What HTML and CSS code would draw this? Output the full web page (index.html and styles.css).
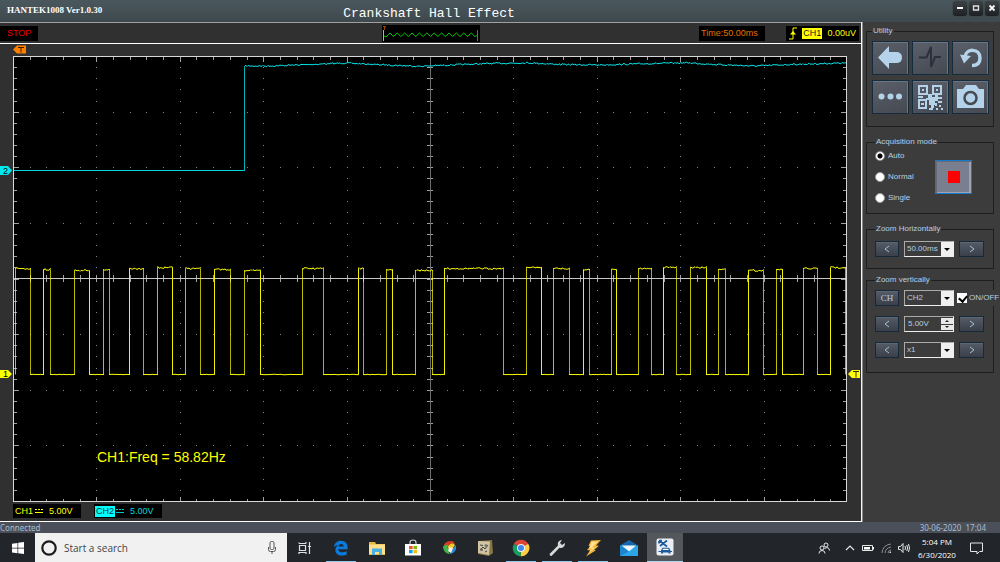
FILE: index.html
```html
<!DOCTYPE html>
<html lang="en">
<head>
<meta charset="utf-8">
<title>HANTEK1008 Ver1.0.30</title>
<link rel="stylesheet" href="styles.css">
</head>
<body>
<header class="titlebar">
  <span class="app-name">HANTEK1008 Ver1.0.30</span>
  <h1 class="title">Crankshaft Hall Effect</h1>
  <div class="window-buttons">
    <button class="win-btn" aria-label="Minimize"><svg viewBox="0 0 14 14"><path d="M4 7h6" stroke="#fff" stroke-width="2"/></svg></button>
    <button class="win-btn" aria-label="Maximize"><svg viewBox="0 0 14 14"><path d="M4.500 5h5v4h-5z" fill="none" stroke="#dfe4e6" stroke-width="1.300"/></svg></button>
    <button class="win-btn" aria-label="Close"><svg viewBox="0 0 14 14"><path d="M4.500 4.500l5 5M9.500 4.500l-5 5" stroke="#fff" stroke-width="1.800"/></svg></button>
  </div>
</header>

<main class="workspace">
  <section class="scope">
    <div class="infobar">
      <div class="infobar-left"><span class="readout stop">STOP</span></div>
      <svg class="preview" viewBox="0 0 98 17" aria-hidden="true">
        <path d="M2 11l2 1 4-4 3.500 3.500 3.700-3.500 3.700 3.500 3.700-3.500 3.700 3.500 3.700-3.500 3.700 3.500 3.700-3.500 3.700 3.500 3.700-3.500 3.700 3.500 3.700-3.500 3.700 3.500 3.700-3.500 3.700 3.500 3.700-3.500 3.700 3.500 3.700-3.500 3.700 3.500 3.700-3.500 3.700 3.500 3.700-3.500 3.700 3.500 2-1" fill="none" stroke="#00c800"/>
        <path d="M1.500 5v11" stroke="#0ff"/><path d="M95.500 5v11" stroke="#009a9a"/>
        <path d="M1 1.500h3M2.500 1v4" stroke="#a04a00"/>
      </svg>
      <div class="infobar-right">
        <span class="readout time">Time:50.00ms</span>
        <span class="readout trigger">
          <svg class="edge-icon" viewBox="0 0 8 13" aria-hidden="true"><path d="M0 12h4V1h4" fill="none" stroke="#ff0"/><path d="M1 7.500h6L4 4z" fill="#ff0"/></svg>
          <span class="tag tag-yellow">CH1</span><span>0.00uV</span>
        </span>
      </div>
    </div>
    <svg class="plot" viewBox="0 44 861 459" role="img" aria-label="Oscilloscope traces">
      <rect x="13" y="56" width="834" height="446" fill="#000"/>
      <g id="grid"></g>
      <path d="M13 278.500h834" stroke="#c8c8c8"/>
      <path d="M430.500 56v446" stroke="#6e6e6e"/>
      <g id="traces" fill="none"></g>
      <rect x="13.500" y="56.500" width="833" height="445" fill="none" stroke="#d8d8d8"/>
      <path d="M13 49.500l4-4h9v8h-9z" fill="#ff8000"/>
      <path d="M18 47.500h6M21 47.500v5" stroke="#3a2000" fill="none"/>
      <path d="M0 166h8l4 4.500-4 4.500H0z" fill="#00e8f0"/>
      <text x="3" y="174" class="marker">2</text>
      <path d="M0 370h8l4 4-4 4H0z" fill="#ff0"/>
      <text x="3" y="377" class="marker">1</text>
      <path d="M848 374l4-4h8v8h-8z" fill="#ff0"/>
      <path d="M853 371.500h6M856 371.500v6" stroke="#333300" fill="none"/>
      <text x="97" y="462" class="measure">CH1:Freq = 58.82Hz</text>
    </svg>
    <div class="channels">
      <span class="readout channel ch1"><span class="tag">CH1</span><svg class="dc" viewBox="0 0 8 5" aria-hidden="true"><path d="M0 .5h8" stroke="#ff0" stroke-dasharray="2 1"/><path d="M0 3.500h8" stroke="#ff0"/></svg><span>5.00V</span></span>
      <span class="readout channel ch2"><span class="tag tag-cyan">CH2</span><svg class="dc" viewBox="0 0 8 5" aria-hidden="true"><path d="M0 .5h8" stroke="#0cc" stroke-dasharray="2 1"/><path d="M0 3.500h8" stroke="#0cc"/></svg><span>5.00V</span></span>
    </div>
  </section>

  <aside class="side">
    <fieldset class="group utility">
      <legend>Utility</legend>
      <button class="tool" aria-label="Back"><svg viewBox="0 0 35 32"><path d="M5 15.500L16 4v6h7q6 0 6 5.500T23 21h-7v6z"/></svg></button>
      <button class="tool" aria-label="Pulse"><svg viewBox="0 0 35 32"><path d="M6 15.500h7.500L18 5v20l4-10h6" fill="none" stroke="#2d2f3c" stroke-width="2"/></svg></button>
      <button class="tool" aria-label="Undo"><svg viewBox="0 0 35 32"><path d="M12 15c1-9 15-9 15 1 0 5-3 7.500-8 7.500" fill="none" stroke="#b4d3ea" stroke-width="3.500"/><path d="M7 12.500l11 1.500-7 7.500z"/></svg></button>
      <button class="tool" aria-label="More"><svg viewBox="0 0 35 32"><circle cx="8.500" cy="15.500" r="3"/><circle cx="17.500" cy="15.500" r="3"/><circle cx="26" cy="15.500" r="3"/></svg></button>
      <button class="tool" aria-label="QR code"><svg viewBox="0 0 35 32"><path fill-rule="evenodd" d="M5 4h10v10H5zm2 2v6h6V6zM19 4h10v10H19zm2 2v6h6V6zM5 18h9v10H5zm2 2v6h5v-6z"/><path d="M9 8h2v2H9zM23 8h2v2h-2zM8 22h3v2H8zM15 13h4v3h3v-2h3v2h4v2h-4v2h-3v2h2v2h-3v3h-3v-3h-2v-5h-3v-2h2zM5 15h5v2H5zM25 20h4v2h-4zM22 23h2v2h-2zM26 24h2v2h-2zM23 27h2v2h-2zM16 27h4v2h-4zM28 27h2v2h-2z"/></svg></button>
      <button class="tool" aria-label="Snapshot"><svg viewBox="0 0 35 32"><path d="M4 8h6l3-4h10l3 4h5v19H4z"/><circle cx="17.500" cy="17" r="6" fill="#b4d3ea" stroke="#464a52" stroke-width="2.500"/></svg></button>
    </fieldset>

    <fieldset class="group acquisition">
      <legend>Acquisition mode</legend>
      <div class="modes">
        <label><input type="radio" name="mode" checked>Auto</label>
        <label><input type="radio" name="mode">Normal</label>
        <label><input type="radio" name="mode">Single</label>
      </div>
      <button class="stop-btn" aria-label="Stop acquisition"><span></span></button>
    </fieldset>

    <fieldset class="group zoom zoom-h">
      <legend>Zoom Horizontally</legend>
      <button class="step" aria-label="Shorter time base"><svg viewBox="0 0 8 8"><path d="M6 1L2 4l4 3"/></svg></button>
      <span class="combo"><select aria-label="Time base"><option>50.00ms</option></select></span>
      <button class="step" aria-label="Longer time base"><svg viewBox="0 0 8 8"><path d="M2 1l4 3-4 3"/></svg></button>
    </fieldset>

    <fieldset class="group zoom">
      <legend>Zoom vertically</legend>
      <button class="step step-text">CH</button>
      <span class="combo"><select aria-label="Channel"><option>CH2</option></select></span>
      <label class="toggle"><input type="checkbox" checked>ON/OFF</label>

      <button class="step" aria-label="Smaller scale"><svg viewBox="0 0 8 8"><path d="M6 1L2 4l4 3"/></svg></button>
      <span class="spinner"><input type="text" value="5.00V" aria-label="Volts per division"><span class="spin"><button aria-label="Up"><i class="up"></i></button><button aria-label="Down"><i class="down"></i></button></span></span>
      <button class="step" aria-label="Larger scale"><svg viewBox="0 0 8 8"><path d="M2 1l4 3-4 3"/></svg></button>

      <button class="step" aria-label="Lower probe factor"><svg viewBox="0 0 8 8"><path d="M6 1L2 4l4 3"/></svg></button>
      <span class="combo"><select aria-label="Probe factor"><option>x1</option></select></span>
      <button class="step" aria-label="Higher probe factor"><svg viewBox="0 0 8 8"><path d="M2 1l4 3-4 3"/></svg></button>
    </fieldset>
  </aside>
</main>

<div class="statusbar"><span>Connected</span><span>30-06-2020&nbsp; 17:04</span></div>

<footer class="taskbar">
  <button class="start" aria-label="Start"><svg viewBox="0 0 12 12"><path fill="#fff" d="M0 1.700l5.500-.8v4.800H0zM6.200.8L12 0v5.700H6.200zM0 6.400h5.500v4.800L0 10.400zM6.200 6.400H12V12l-5.800-.8z"/></svg></button>
  <div class="search">
    <svg class="cortana" viewBox="0 0 16 16" aria-hidden="true"><circle cx="8" cy="8" r="6.700" fill="none" stroke="#1b1b1b" stroke-width="2.200"/></svg>
    <input type="text" placeholder="Start a search" aria-label="Start a search">
    <svg class="mic" viewBox="0 0 8 13" aria-hidden="true"><rect x="2" y=".5" width="4" height="8" rx="1.500" fill="none" stroke="#555"/><path d="M.5 6v2.500q0 2 2 2h3q2 0 2-2V6M4 10.500V13" fill="none" stroke="#555"/></svg>
  </div>
  <nav class="apps">
    <button class="app" aria-label="Task view"><svg viewBox="0 0 18 18"><path d="M3.500 6.500h6v5h-6zM3 3.500v1M3 4.500h7M10 3v1.500M3 15v-1.500h7V15M13.500 3v12M12 7.500h3" fill="none" stroke="#e0e0e0" stroke-width="1.200"/></svg></button>
    <button class="app open" aria-label="Edge"><svg viewBox="0 0 18 18"><path fill="#0a7bdc" d="M2 8.200C2.500 4 5.200 1.800 9 1.800c4.300 0 6.600 2.900 6.600 6.500v1.900H6.300c.2 2.200 1.900 3.100 4.100 3.100 1.700 0 3.100-.4 4.300-1.100v3.200c-1.200.7-3 1.100-4.900 1.100-3.900 0-6.400-2.200-6.400-5.600 0-2.300 1.300-3.900 3.400-4.800-1.800.1-3.500.8-4.800 2.100zm4.500-.6h5.200c0-1.700-.9-2.600-2.500-2.600S6.800 6 6.500 7.600z"/></svg></button>
    <button class="app" aria-label="File Explorer"><svg viewBox="0 0 18 18"><path fill="#e9b83c" d="M1 3h6l1 2h9v11H1z"/><path fill="#ffe08a" d="M1 5.500h16V15H1z"/><path fill="#4bb0e4" d="M4 16V9.500h10V16h-3v-3H7v3z"/></svg></button>
    <button class="app" aria-label="Store"><svg viewBox="0 0 18 18"><path d="M6 5V3.500Q6 1 9 1t3 2.500V5" fill="none" stroke="#ccc" stroke-width="1.200"/><path fill="#fff" d="M1 5h16v11.500H1z"/><path fill="#f25022" d="M5 7h3.600v3.200H5z"/><path fill="#7fba00" d="M9.400 7H13v3.200H9.400z"/><path fill="#00a4ef" d="M5 11h3.600v3.200H5z"/><path fill="#ffb900" d="M9.400 11H13v3.200H9.400z"/></svg></button>
    <button class="app" aria-label="Color swirl"><svg viewBox="0 0 18 18"><path fill="#e03a24" d="M3 9q1-7 8-7 3 0 4 3-5-2-7 2-2 1-5 2z"/><path fill="#3fb54a" d="M3 8q2-3 5-2-1 4 2 9-6 0-7-7z"/><path fill="#f5c928" d="M8 7q4-5 7-1l-4 6q-3-1-3-5z"/><path fill="#3487d6" d="M10 15l1-4 5-5q1 8-6 9z"/><path fill="#f4f4e6" d="M9 8l4 1-2 5-3-2z"/></svg></button>
    <button class="app" aria-label="Schematics"><svg viewBox="0 0 18 18"><path fill="#8a7440" d="M3 2l13-1 1 13-4 3-11-2z"/><path fill="#cfc5a2" d="M2 2l12 .5-1 13.500-11-2z"/><path d="M4 11l3-3 2 2 3-4M4 6l3 .5M9 13l2-1" stroke="#444" fill="none"/><circle cx="5.500" cy="10.500" r="1.500" fill="#666"/><circle cx="10" cy="6.500" r="1.500" fill="#777"/></svg></button>
    <button class="app open" aria-label="Chrome"><svg viewBox="0 0 18 18"><path fill="#dc4437" d="M9 9L1.800 5A8.200 8.200 0 0 1 16.200 5z"/><path fill="#ffce43" d="M9 9l7.200-4.200A8.200 8.200 0 0 1 8.500 17.200z"/><path fill="#15a05e" d="M9 9l-.5 8.200A8.200 8.200 0 0 1 1.800 5z"/><path fill="#dc4437" d="M9 5h7.200L15 3.500 9 2z"/><circle cx="9" cy="9" r="4" fill="#f2f2f2"/><circle cx="9" cy="9" r="3" fill="#4285f4"/></svg></button>
    <button class="app open" aria-label="Wrench"><svg viewBox="0 0 18 18"><path fill="#d8d8d8" d="M1.500 15L10 6.500Q9 3 12 1.500l2-.5-2 3 2 2 3-2q0 4-3.500 5-1 .3-2-.2L3.500 17q-2-.2-2-2z"/></svg></button>
    <button class="app open" aria-label="Lightning"><svg viewBox="0 0 18 18"><path fill="#f3b53a" d="M7 1.500L17 1l-5 5.500 3 .2-5 4.300 2 .3L2 17.500l4-6-3-.5 3.500-4-2-.3z"/><path fill="#ffe08c" d="M8 2.500h6L8 8.500l3 .3-6 5 3-4.300-3-.5z"/></svg></button>
    <button class="app" aria-label="Mail"><svg viewBox="0 0 18 18"><path fill="#1568b0" d="M0 6.500L9 1l9 5.500z"/><path fill="#2aa6e6" d="M0 6.500h18V17H0z"/><path fill="#eef6fb" d="M2 6.500h14l-7 6z"/><path fill="#1b86cf" d="M0 6.500l9 6L0 17z"/></svg></button>
    <button class="app active" aria-label="Hantek 1008"><svg viewBox="0 0 18 18"><rect x=".5" y=".5" width="17" height="17" rx="2" fill="#e8eef4"/><path d="M3 2.500l8 6M11 2.500L4 8M3 3v2.500M6 2.500H3" stroke="#1c5a9c" stroke-width="1.700" fill="none"/><path fill="#1c5a9c" d="M5 12.500l1.500-2.700h6.500l1.500 2.700v3h-2v-1H7v1H5zM2.500 13H16v1H2.500z"/><path fill="#fff" d="M7.200 10.700h5l.7 1.300H6.500z"/></svg></button>
  </nav>
  <div class="tray">
    <svg class="people" viewBox="0 0 12 12"><g fill="none" stroke="#e6e6e6"><circle cx="8" cy="3" r="2"/><circle cx="4" cy="6" r="2"/><path d="M1 11.500Q1 8.500 4 8.500t3 3M6.500 6.500Q11 4 11.500 8.500"/></g></svg>
    <svg class="chevron" viewBox="0 0 12 12"><path d="M2 8l4-4 4 4" fill="none" stroke="#e6e6e6" stroke-width="1.200"/></svg>
    <svg class="battery" viewBox="0 0 12 12"><path d="M.5 3.500h10v5H.5z" fill="none" stroke="#e6e6e6"/><path d="M2 5h6v2.500H2zM11 5h1v2.500h-1z" fill="#fff"/></svg>
    <svg class="wifi" viewBox="0 0 12 12"><path d="M2 11Q2.500 3 11 2M5 11Q5.500 6 11 5M8 11q.5-3 3-3" fill="none" stroke="#8b8d90"/><path d="M9 11l2-2v2z" fill="#ddd"/></svg>
    <svg class="speaker" viewBox="0 0 12 12"><path d="M.5 4.500h2l2.500-3v9l-2.500-3h-2zM7 4q1 2 0 4M8.800 3q1.600 3 0 6M10.500 2q2 4 0 8" fill="none" stroke="#e6e6e6"/></svg>
    <time class="clock"><span>5:04 PM</span><span>6/30/2020</span></time>
    <svg class="notice" viewBox="0 0 13 12"><path d="M.5 1h12v8.500H9.500L7 12V9.500H.5z" fill="none" stroke="#e6e6e6"/></svg>
  </div>
</footer>
<script src="scope.js"></script>
</body>
</html>
```
FILE: scope.js
```js
const NS = "http://www.w3.org/2000/svg";
const grid = document.getElementById("grid");
const traces = document.getElementById("traces");
const LEFT = 13, TOP = 56, WIDTH = 834, HEIGHT = 445;

function path(parent, d, stroke, opacity) {
  const el = document.createElementNS(NS, "path");
  el.setAttribute("d", d);
  el.setAttribute("stroke", stroke);
  if (opacity) el.setAttribute("opacity", opacity);
  parent.appendChild(el);
}

// Ten by eight divisions, each split in five.
let dots = "", ticks = "";
const gx = i => Math.round(LEFT + i * WIDTH / 50) + 0.5;
const gy = j => Math.round(TOP + j * HEIGHT / 40) + 0.5;
for (let i = 1; i < 50; i++) {
  const len = i % 5 ? 4 : 6;
  const x = gx(i);
  ticks += `M${x} 57v${len - 1}M${x} 502v${-len + 1}M${x} 275v7`;
  for (let j = 5; j < 40; j += 5) dots += `M${x - 0.5} ${gy(j)}h1`;
}
for (let j = 1; j < 40; j++) {
  const len = j % 5 ? 4 : 6;
  const y = gy(j);
  ticks += `M13 ${y}h${len}M847 ${y}h${-len}M427 ${y}h6`;
  for (let i = 5; i < 50; i += 5) dots += `M${gx(i) - 0.5} ${y}h1`;
}
path(grid, dots, "#858585");
path(grid, ticks, "#a0a0a0");

// Repeatable sampling noise.
let seed = 7;
function noise() {
  seed = (seed * 16807) % 2147483647;
  return seed / 2147483647 - 0.5;
}
function wobble(x0, x1, y0, y1, amount) {
  let d = `M${x0} ${y0}`;
  for (let x = x0 + 1; x <= x1; x++) {
    const t = (x - x0) / (x1 - x0);
    d += `L${x} ${(y0 + (y1 - y0) * t + noise() * amount).toFixed(1)}`;
  }
  return d;
}

// Channel 2: points of the upper level.
const level = [[245, 66], [270, 66], [310, 64.5], [345, 63], [375, 64.5], [420, 66.3], [450, 65],
  [490, 63.5], [528, 62.8], [560, 64.5], [600, 65], [640, 63.8], [688, 62.8], [715, 64.5],
  [755, 66], [790, 64.5], [846, 63]];
path(traces, "M14 170.500H245", "#00d8dc");
path(traces, "M244.500 171V66", "#00b4b8");
for (let i = 1; i < level.length; i++) {
  path(traces, wobble(level[i - 1][0], level[i][0], level[i - 1][1], level[i][1], 1.6), "#00e4e8");
}

// Channel 1: rise, fall and top level of each pulse.
const pulses = [[15, 30, 268], [43, 50, 269], [74, 89, 270], [103, 109, 269], [129, 143, 268],
  [157, 172, 267], [185, 200, 268], [214, 230, 269], [244, 260, 270], [302, 323, 268],
  [358, 363, 268], [386, 392, 269], [415, 432, 270], [444, 503, 268], [526, 541, 267],
  [553, 569, 268], [583, 589, 269], [611, 616, 269], [638, 651, 268], [663, 676, 267],
  [690, 706, 267], [718, 725, 269], [748, 763, 270], [776, 782, 269], [803, 817, 268],
  [830, 845, 267]];
const LOW = 374.5;
pulses.forEach(([up, down, top], i) => {
  const y = top + 0.5;
  path(traces, `M${up + 0.5} ${LOW}V${y}`, "#ffff00", i % 3 === 1 ? 0.95 : 0.75);
  path(traces, `M${down + 0.5} ${y}V${LOW}`, "#ffff00", i % 3 === 2 ? 0.95 : 0.7);
  path(traces, wobble(up, down + 1, y, y, 1.8), "#f8f800");
  const next = pulses[i + 1];
  if (next) path(traces, wobble(down, next[0] + 1, LOW, LOW, 0.5), "#ffff00");
});
```
FILE: styles.css
```css
* { box-sizing: border-box; }
body {
  margin: 0;
  min-height: 100vh;
  display: flex;
  flex-direction: column;
  background: #3c3c3c;
  color: #b4cfe4;
  font: 8px/10px "Liberation Sans", Arial, sans-serif;
}
button, input, select { font: inherit; color: inherit; margin: 0; }
button { padding: 0; border: 0; display: flex; align-items: center; justify-content: center; }
svg { display: block; }

.titlebar {
  height: 22px;
  display: grid;
  grid-template-columns: 1fr auto 1fr;
  align-items: center;
  padding: 0 1px 0 7px;
  background: linear-gradient(#4a585e, #3e484d);
  color: #fff;
}
.app-name { font: bold 9px/12px "Liberation Serif", serif; padding-bottom: 3px; }
.title { margin: 0; padding: 5px 148px 0 0; font: 13px/16px "Liberation Mono", monospace; }
.window-buttons { display: flex; justify-content: flex-end; gap: 2px; padding-bottom: 6px; }
.win-btn { width: 14px; height: 15px; border-radius: 3px; background: linear-gradient(#3d4245, #1d2022); box-shadow: 0 0 1px #11181b; }
.win-btn svg { width: 14px; height: 14px; }

.workspace { flex: 1; display: grid; grid-template-columns: minmax(0, 1fr) 138px; }
.scope {
  display: flex;
  flex-direction: column;
  background: #303030;
  border-right: 1px solid #f4f4f4;
  border-bottom: 1px solid #fff;
  min-width: 0;
}
.infobar {
  display: grid;
  grid-template-columns: 1fr 98px 1fr;
  align-items: center;
  height: 22px;
  border-top: 1px solid #a0a0a0;
  border-bottom: 1px solid #fff;
}
.infobar-left { display: flex; }
.infobar-right { display: flex; justify-content: flex-end; gap: 21px; padding-right: 2px; }
.preview { width: 98px; height: 17px; background: #000; }
.readout { display: flex; align-items: center; height: 15px; background: #000; font-size: 9px; line-height: 11px; }
.stop { padding: 0 7px; color: #e80000; }
.time { width: 66px; padding-left: 2px; color: #e87000; }
.trigger { width: 73px; padding: 0 3px; color: #ff0; justify-content: space-between; }
.edge-icon { width: 8px; height: 13px; }
.tag-yellow { background: #ff0; color: #222; padding: 0 1px; }
.plot { width: 100%; height: auto; }
.marker { font: 9px "Liberation Sans", sans-serif; fill: #000; }
.measure { font: 14px "Liberation Sans", sans-serif; fill: #ff0; }
.channels { display: flex; gap: 13px; padding: 1px 13px 3px; }
.channel { width: 68px; height: 14px; padding-left: 1px; gap: 1px; }
.channel .tag { padding: 0 1px; }
.channel .dc { width: 8px; height: 5px; margin-right: 5px; }
.ch1 { color: #ff0; }
.ch2 { color: #00d8dc; }
.tag-cyan { background: #0ff; color: #063c3c; }

.side { background: #3c3c3c; border-left: 1px solid #8a8a8a; padding: 4px 6px 0 3px; }
.group { margin: 0 0 10px; padding: 0; min-width: 0; border: 1px solid #1e1e1e; }
.group legend { margin-left: 6px; padding: 0 1px; height: 10px; }
.utility { display: grid; grid-template-columns: repeat(3, 37px); gap: 5px 3px; padding: 5px 5px 12px; }
.tool {
  height: 34px;
  background: linear-gradient(160deg, #5a5f69, #454952);
  border: 1px solid #152c3e;
  box-shadow: inset -1px 1px 0 #6c7480;
}
.tool svg { width: 35px; height: 32px; fill: #b4d3ea; }
.acquisition { display: flex; align-items: center; justify-content: space-between; padding: 4px 21px 10px 8px; }
.modes { display: flex; flex-direction: column; gap: 11px; }
.modes label { display: flex; align-items: center; gap: 3px; height: 10px; }
.modes input {
  appearance: none;
  width: 10px;
  height: 10px;
  border-radius: 50%;
  border: 1px solid #999;
  background: #fff;
}
.modes input:checked { background: radial-gradient(circle, #000 2px, #fff 3px); }
.stop-btn { width: 37px; height: 34px; background: #7a7f90; border: 1px solid #1878c8; box-shadow: inset 1px 1px 0 #656a7a, inset -2px -1px 0 #9da2b4; }
.stop-btn span { width: 12px; height: 12px; background: #f00; }
.zoom { display: grid; grid-template-columns: 24px 50px 25px; gap: 10px 5px; padding: 5px 8px 14px; }
.zoom-h { padding: 7px 8px 11px; margin-bottom: 6px; }
.group.zoom legend, .group.acquisition legend, .group.utility legend { margin-left: 0; }
.utility legend { padding: 0 1px; }
.step { height: 16px; background: linear-gradient(#555c68, #3a3f49); border: 1px solid #14293a; box-shadow: inset 0 1px 0 #5e6672; }
.step svg { width: 8px; height: 8px; fill: none; stroke: #a5c0d5; }
.step-text { font: 9px/10px "Liberation Serif", serif; }
.combo, .spinner { position: relative; height: 16px; border: 1px solid #eee; border-top-color: #aaa; border-left-color: #aaa; background: #3c3c3c; display: flex; }
.combo select { appearance: none; width: 100%; border: 0; padding: 0 0 0 2px; background: transparent; outline: 0; }
.combo::before { content: ""; position: absolute; right: 0; top: 0; bottom: 0; width: 12px; background: #f0f0f0; pointer-events: none; }
.combo::after { content: ""; position: absolute; right: 3px; top: 6px; border: 3px solid transparent; border-top: 3px solid #000; border-bottom: 0; pointer-events: none; }
.spinner input { flex: 1; min-width: 0; width: 0; border: 0; padding: 0 0 0 3px; background: transparent; outline: 0; }
.spin { display: flex; flex-direction: column; gap: 1px; width: 12px; padding: 1px 0; }
.spin button { flex: 1; background: #e8e8e8; }
.spin i { border: 2px solid transparent; }
.spin .up { border-top: 0; border-bottom: 2px solid #222; }
.spin .down { border-bottom: 0; border-top: 2px solid #222; }
.toggle { display: flex; align-items: center; gap: 2px; width: 42px; margin-left: -2px; background: #3c3c3c; }
.toggle input { appearance: none; flex: none; width: 10px; height: 10px; background: #fff; position: relative; }
.toggle input:checked::after { content: ""; position: absolute; left: 3px; top: 1px; width: 4px; height: 6px; border: solid #000; border-width: 0 2px 2px 0; transform: rotate(40deg); }

.statusbar {
  display: flex;
  justify-content: space-between;
  padding-right: 14px;
  background: #4b4f59;
  color: #a4bed2;
  font: 8px/11px "Noto Sans", sans-serif;
}
.taskbar { display: flex; height: 29px; background: #22262a; color: #fff; font: 8px/13px "Open Sans", sans-serif; }
.start { width: 35px; background: none; }
.start svg { width: 12px; height: 12px; }
.search { width: 252px; display: flex; align-items: center; gap: 7px; padding: 0 11px 0 6px; background: #f1f1f1; color: #444; }
.cortana { width: 16px; height: 16px; }
.search input { flex: 1; min-width: 0; padding: 0; border: 0; background: none; outline: 0; font: 10px/14px "Open Sans", sans-serif; }
.search input::placeholder { color: #444; opacity: 1; }
.mic { width: 8px; height: 13px; }
.apps { display: flex; }
.app { width: 36px; background: none; position: relative; }
.app svg { width: 18px; height: 18px; }
.app.open::after { content: ""; position: absolute; left: 3px; right: 3px; bottom: 0; height: 1px; background: #8ecbf2; }
.app.active { background: #55585b; border-bottom: 1px solid #a8d8f5; }
.tray { margin-left: auto; display: flex; align-items: center; padding-right: 17px; gap: 6px; }
.tray svg { width: 12px; height: 12px; }
.tray .people { margin-right: 8px; }
.tray .notice { width: 13px; }
.clock { display: flex; flex-direction: column; align-items: center; width: 42px; margin: 0 6px 0 0; }
```
